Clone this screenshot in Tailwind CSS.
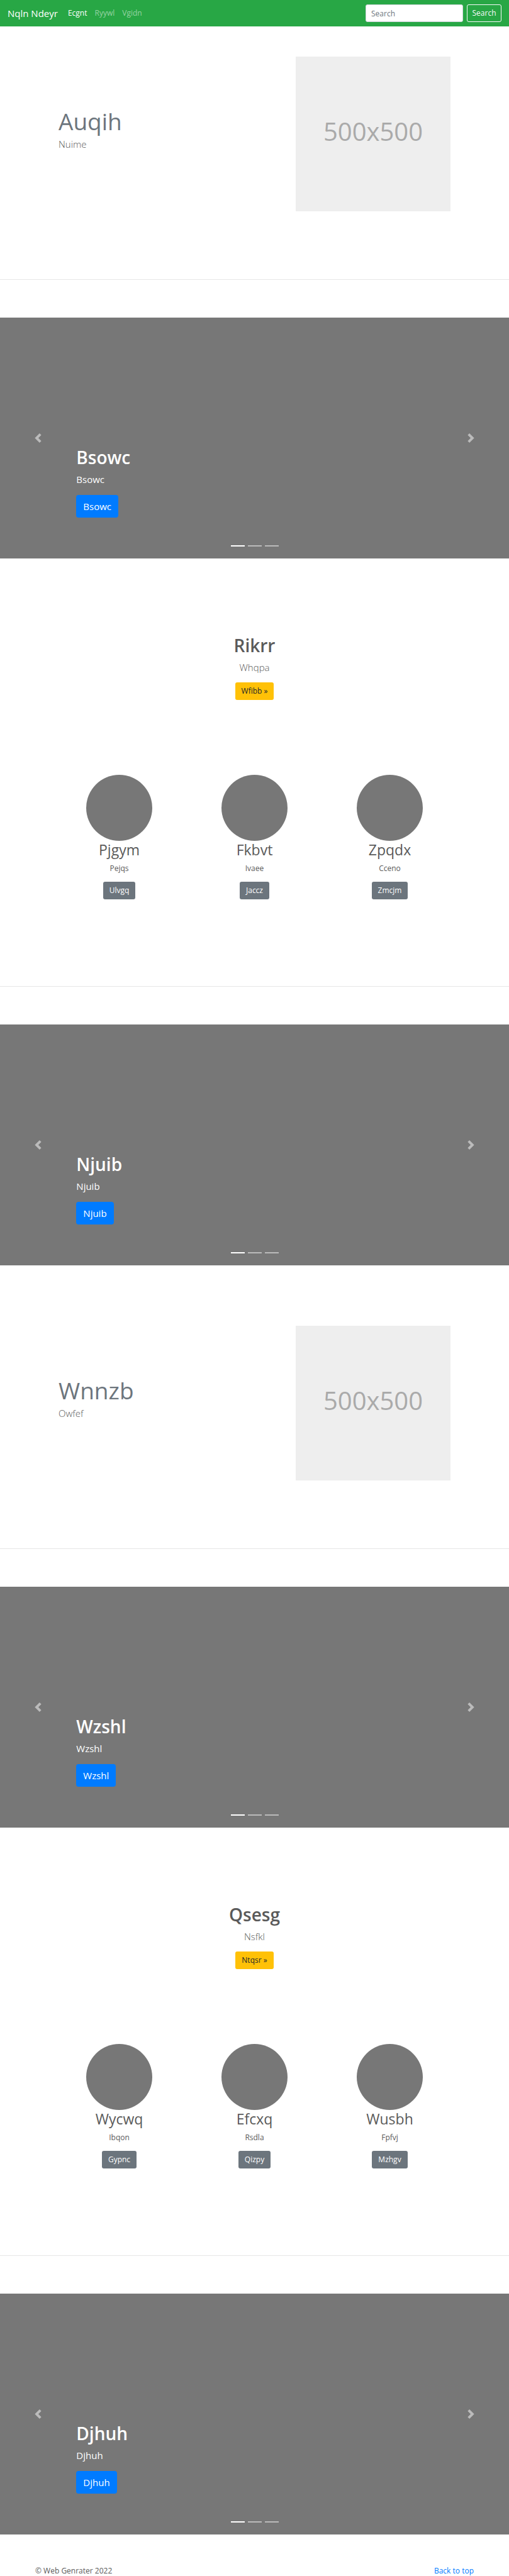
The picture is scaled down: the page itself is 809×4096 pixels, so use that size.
<!DOCTYPE html>
<html lang="en">
<head>
<meta charset="utf-8">
<meta name="viewport" content="width=device-width, initial-scale=1">
<title>Nqln Ndeyr</title>
<script src="https://cdn.jsdelivr.net/npm/@tailwindcss/browser@4"></script>
</head>
<body class="bg-white font-['Open_Sans','Noto_Sans',sans-serif] text-xs text-[#5a5a5a]">
<header>
  <nav class="flex h-[42px] items-center bg-[#28a745] px-3">
    <a href="#" class="text-[15px] text-white">Nqln Ndeyr</a>
    <div class="ml-4 flex flex-1 gap-3">
      <a href="#" class="text-white">Ecgnt</a>
      <a href="#" class="text-white/50">Ryywl</a>
      <a href="#" class="text-white/50">Vgidn</a>
    </div>
    <form class="flex gap-1.5">
      <input type="search" aria-label="Search" placeholder="Search" class="h-7 w-[155px] rounded-[3px] border border-[#ced4da] bg-white px-2 placeholder:text-[#6c757d]">
      <button type="button" class="h-7 w-[55px] rounded-[3px] border border-[#f8f9fa] text-[#f8f9fa]">Search</button>
    </form>
  </nav>
</header>
<main>
  <section class="flex items-start justify-between px-[93px] pt-12">
    <div class="pt-20">
      <h2 class="text-[37px] leading-[46px] text-[#6c757d]">Auqih</h2>
      <p class="mt-0.5 text-[15px] leading-[22px] font-light">Nuime</p>
    </div>
    <div role="img" aria-label="500x500" class="flex size-[246px] items-center justify-center bg-[#eee] pb-2 text-[40px] text-[#aaa]">500x500</div>
  </section>
  <hr class="mt-[108px] mb-[60px] border-[#e6e6e6]">

  <section class="relative flex h-[383px] bg-[#777]">
    <button type="button" aria-label="Previous" class="flex w-[15%] items-center justify-center opacity-50"><svg class="size-[15px]" viewBox="0 0 8 8" fill="#fff"><path d="M5.25 0l-4 4 4 4 1.5-1.5-2.5-2.5 2.5-2.5-1.5-1.5z"/></svg></button>
    <div class="flex flex-1 flex-col items-start justify-end pb-[65px] text-[15px] text-white">
      <h2 class="text-[28px] leading-9 font-semibold">Bsowc</h2>
      <p class="mt-1.5 leading-[22px]">Bsowc</p>
      <a href="#" class="mt-3.5 flex h-9 items-center rounded-[4px] bg-[#007bff] px-[11px]">Bsowc</a>
    </div>
    <button type="button" aria-label="Next" class="flex w-[15%] items-center justify-center opacity-50"><svg class="size-[15px]" viewBox="0 0 8 8" fill="#fff"><path d="M2.75 0l-1.5 1.5 2.5 2.5-2.5 2.5 1.5 1.5 4-4-4-4z"/></svg></button>
    <div class="absolute inset-x-0 bottom-[19px] flex justify-center gap-[5px]"><span class="h-0.5 w-[22px] bg-white"></span><span class="h-0.5 w-[22px] bg-white/50"></span><span class="h-0.5 w-[22px] bg-white/50"></span></div>
  </section>

  <section class="flex flex-col items-center pt-[120px]">
    <h2 class="text-[28px] leading-9 font-semibold">Rikrr</h2>
    <p class="mt-1.5 text-[15px] leading-[22px] font-light">Whqpa</p>
    <a href="#" class="mt-[13px] flex h-7 items-center rounded-[3px] bg-[#ffc107] px-2.5 text-[#212529]">Wfibb »</a>
  </section>
  <section class="grid grid-cols-3 px-[82px] pt-[119px]">
    <div class="flex flex-col items-center">
      <div class="size-[105px] rounded-full bg-[#777]"></div>
      <h3 class="text-[23px] leading-[29px]">Pjgym</h3>
      <p class="mt-1.5 leading-[18px]">Pejqs</p>
      <a href="#" class="mt-3 flex h-7 items-center rounded-[3px] bg-[#6c757d] px-2.5 text-white">Ulvgq</a>
    </div>
    <div class="flex flex-col items-center">
      <div class="size-[105px] rounded-full bg-[#777]"></div>
      <h3 class="text-[23px] leading-[29px]">Fkbvt</h3>
      <p class="mt-1.5 leading-[18px]">Ivaee</p>
      <a href="#" class="mt-3 flex h-7 items-center rounded-[3px] bg-[#6c757d] px-2.5 text-white">Jaccz</a>
    </div>
    <div class="flex flex-col items-center">
      <div class="size-[105px] rounded-full bg-[#777]"></div>
      <h3 class="text-[23px] leading-[29px]">Zpqdx</h3>
      <p class="mt-1.5 leading-[18px]">Cceno</p>
      <a href="#" class="mt-3 flex h-7 items-center rounded-[3px] bg-[#6c757d] px-2.5 text-white">Zmcjm</a>
    </div>
  </section>
  <hr class="mt-[138px] mb-[60px] border-[#e6e6e6]">

  <section class="relative flex h-[383px] bg-[#777]">
    <button type="button" aria-label="Previous" class="flex w-[15%] items-center justify-center opacity-50"><svg class="size-[15px]" viewBox="0 0 8 8" fill="#fff"><path d="M5.25 0l-4 4 4 4 1.5-1.5-2.5-2.5 2.5-2.5-1.5-1.5z"/></svg></button>
    <div class="flex flex-1 flex-col items-start justify-end pb-[65px] text-[15px] text-white">
      <h2 class="text-[28px] leading-9 font-semibold">Njuib</h2>
      <p class="mt-1.5 leading-[22px]">Njuib</p>
      <a href="#" class="mt-3.5 flex h-9 items-center rounded-[4px] bg-[#007bff] px-[11px]">Njuib</a>
    </div>
    <button type="button" aria-label="Next" class="flex w-[15%] items-center justify-center opacity-50"><svg class="size-[15px]" viewBox="0 0 8 8" fill="#fff"><path d="M2.75 0l-1.5 1.5 2.5 2.5-2.5 2.5 1.5 1.5 4-4-4-4z"/></svg></button>
    <div class="absolute inset-x-0 bottom-[19px] flex justify-center gap-[5px]"><span class="h-0.5 w-[22px] bg-white"></span><span class="h-0.5 w-[22px] bg-white/50"></span><span class="h-0.5 w-[22px] bg-white/50"></span></div>
  </section>

  <section class="flex items-start justify-between px-[93px] pt-24">
    <div class="pt-20">
      <h2 class="text-[37px] leading-[46px] text-[#6c757d]">Wnnzb</h2>
      <p class="mt-0.5 text-[15px] leading-[22px] font-light">Owfef</p>
    </div>
    <div role="img" aria-label="500x500" class="flex size-[246px] items-center justify-center bg-[#eee] pb-2 text-[40px] text-[#aaa]">500x500</div>
  </section>
  <hr class="mt-[108px] mb-[60px] border-[#e6e6e6]">

  <section class="relative flex h-[383px] bg-[#777]">
    <button type="button" aria-label="Previous" class="flex w-[15%] items-center justify-center opacity-50"><svg class="size-[15px]" viewBox="0 0 8 8" fill="#fff"><path d="M5.25 0l-4 4 4 4 1.5-1.5-2.5-2.5 2.5-2.5-1.5-1.5z"/></svg></button>
    <div class="flex flex-1 flex-col items-start justify-end pb-[65px] text-[15px] text-white">
      <h2 class="text-[28px] leading-9 font-semibold">Wzshl</h2>
      <p class="mt-1.5 leading-[22px]">Wzshl</p>
      <a href="#" class="mt-3.5 flex h-9 items-center rounded-[4px] bg-[#007bff] px-[11px]">Wzshl</a>
    </div>
    <button type="button" aria-label="Next" class="flex w-[15%] items-center justify-center opacity-50"><svg class="size-[15px]" viewBox="0 0 8 8" fill="#fff"><path d="M2.75 0l-1.5 1.5 2.5 2.5-2.5 2.5 1.5 1.5 4-4-4-4z"/></svg></button>
    <div class="absolute inset-x-0 bottom-[19px] flex justify-center gap-[5px]"><span class="h-0.5 w-[22px] bg-white"></span><span class="h-0.5 w-[22px] bg-white/50"></span><span class="h-0.5 w-[22px] bg-white/50"></span></div>
  </section>

  <section class="flex flex-col items-center pt-[120px]">
    <h2 class="text-[28px] leading-9 font-semibold">Qsesg</h2>
    <p class="mt-1.5 text-[15px] leading-[22px] font-light">Nsfkl</p>
    <a href="#" class="mt-[13px] flex h-7 items-center rounded-[3px] bg-[#ffc107] px-2.5 text-[#212529]">Ntqsr »</a>
  </section>
  <section class="grid grid-cols-3 px-[82px] pt-[119px]">
    <div class="flex flex-col items-center">
      <div class="size-[105px] rounded-full bg-[#777]"></div>
      <h3 class="text-[23px] leading-[29px]">Wycwq</h3>
      <p class="mt-1.5 leading-[18px]">Ibqon</p>
      <a href="#" class="mt-3 flex h-7 items-center rounded-[3px] bg-[#6c757d] px-2.5 text-white">Gypnc</a>
    </div>
    <div class="flex flex-col items-center">
      <div class="size-[105px] rounded-full bg-[#777]"></div>
      <h3 class="text-[23px] leading-[29px]">Efcxq</h3>
      <p class="mt-1.5 leading-[18px]">Rsdla</p>
      <a href="#" class="mt-3 flex h-7 items-center rounded-[3px] bg-[#6c757d] px-2.5 text-white">Qizpy</a>
    </div>
    <div class="flex flex-col items-center">
      <div class="size-[105px] rounded-full bg-[#777]"></div>
      <h3 class="text-[23px] leading-[29px]">Wusbh</h3>
      <p class="mt-1.5 leading-[18px]">Fpfvj</p>
      <a href="#" class="mt-3 flex h-7 items-center rounded-[3px] bg-[#6c757d] px-2.5 text-white">Mzhgv</a>
    </div>
  </section>
  <hr class="mt-[138px] mb-[60px] border-[#e6e6e6]">

  <section class="relative flex h-[383px] bg-[#777]">
    <button type="button" aria-label="Previous" class="flex w-[15%] items-center justify-center opacity-50"><svg class="size-[15px]" viewBox="0 0 8 8" fill="#fff"><path d="M5.25 0l-4 4 4 4 1.5-1.5-2.5-2.5 2.5-2.5-1.5-1.5z"/></svg></button>
    <div class="flex flex-1 flex-col items-start justify-end pb-[65px] text-[15px] text-white">
      <h2 class="text-[28px] leading-9 font-semibold">Djhuh</h2>
      <p class="mt-1.5 leading-[22px]">Djhuh</p>
      <a href="#" class="mt-3.5 flex h-9 items-center rounded-[4px] bg-[#007bff] px-[11px]">Djhuh</a>
    </div>
    <button type="button" aria-label="Next" class="flex w-[15%] items-center justify-center opacity-50"><svg class="size-[15px]" viewBox="0 0 8 8" fill="#fff"><path d="M2.75 0l-1.5 1.5 2.5 2.5-2.5 2.5 1.5 1.5 4-4-4-4z"/></svg></button>
    <div class="absolute inset-x-0 bottom-[19px] flex justify-center gap-[5px]"><span class="h-0.5 w-[22px] bg-white"></span><span class="h-0.5 w-[22px] bg-white/50"></span><span class="h-0.5 w-[22px] bg-white/50"></span></div>
  </section>
</main>
<footer class="flex justify-between px-14 pt-[50px] leading-4">
  <p>© Web Genrater 2022</p>
  <a href="#" class="text-[#007bff]">Back to top</a>
</footer>
</body>
</html>
